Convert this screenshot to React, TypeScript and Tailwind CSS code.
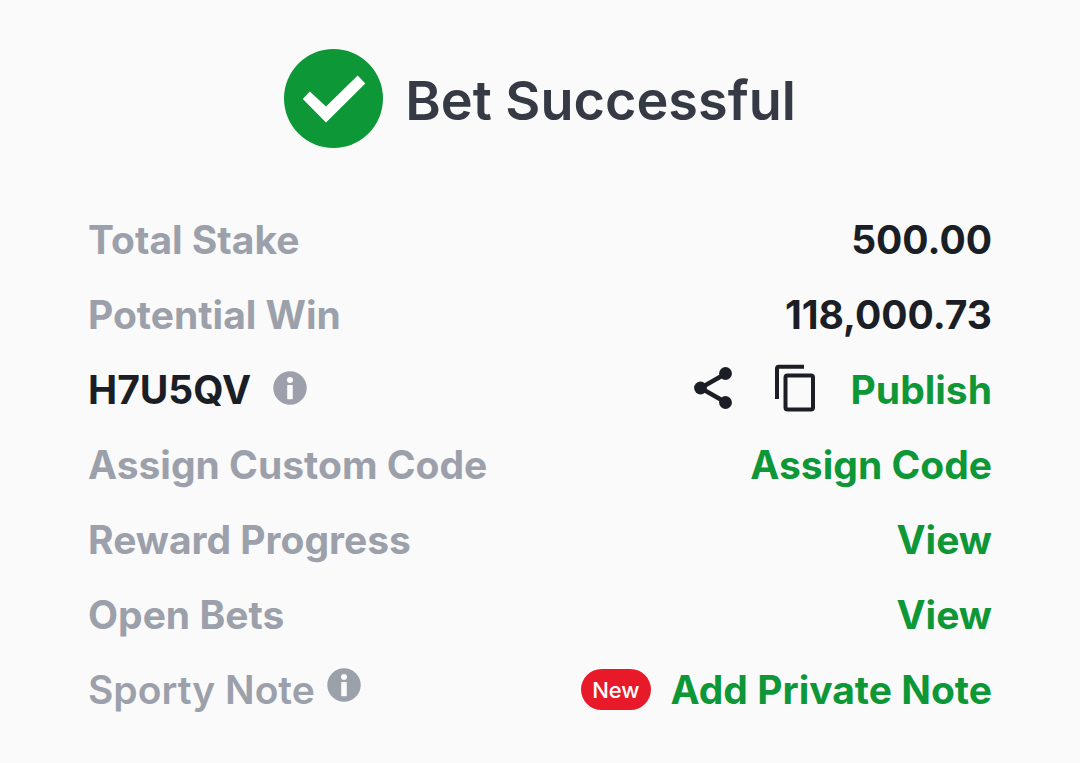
import type { ReactNode } from "react";

function CheckBadge() {
  return (
    <svg viewBox="0 0 99 99" className="size-[99px] shrink-0" aria-hidden="true">
      <circle cx="49.5" cy="49.5" r="49.5" fill="#0d9737" />
      <path d="M25.8 42.5 18.8 50 42 73.5 81.3 34.5 73.7 26.5 42 57.5Z" fill="#fff" />
    </svg>
  );
}

function InfoIcon() {
  return (
    <svg viewBox="0 0 34 34" className="size-[34px]" aria-hidden="true">
      <circle cx="17" cy="17" r="16.7" fill="#9ca0ab" />
      <circle cx="17" cy="9" r="3" fill="#fafafa" />
      <rect x="14.2" y="14" width="5.6" height="14.2" rx="0.8" fill="#fafafa" />
    </svg>
  );
}

function ShareIcon() {
  return (
    <svg viewBox="0 0 40 44" className="h-[44px] w-[40px]" aria-hidden="true">
      <path d="M33 7.5 7.5 22 33 36.5" fill="none" stroke="#1b1e25" strokeWidth="4.4" />
      <circle cx="7.5" cy="22" r="6.4" fill="#1b1e25" />
      <circle cx="32.5" cy="7.5" r="6.4" fill="#1b1e25" />
      <circle cx="32.5" cy="36.5" r="6.4" fill="#1b1e25" />
    </svg>
  );
}

function CopyIcon() {
  return (
    <svg viewBox="0 0 40 48" className="h-[48px] w-[40px]" aria-hidden="true">
      <path d="M2 35V4.5Q2 2.7 3.8 2.7H29" fill="none" stroke="#1b1e25" strokeWidth="4" />
      <rect x="10.5" y="11.5" width="27.5" height="34" rx="2" fill="none" stroke="#1b1e25" strokeWidth="4" />
    </svg>
  );
}

function Row({ label, children }: { label: ReactNode; children: ReactNode }) {
  return (
    <div className="flex h-[75px] items-center justify-between">
      <dt className="flex items-center">{label}</dt>
      <dd className="flex items-center">{children}</dd>
    </div>
  );
}

function Action({ children }: { children: ReactNode }) {
  return (
    <button type="button" className="text-[#0d9737]">
      {children}
    </button>
  );
}

export default function App() {
  return (
    <main className="min-h-screen bg-[#fafafa] px-[88px] pt-[49px] pb-[35px] font-['Inter',sans-serif] text-[39px] leading-[48px] font-bold text-[#1b1e25]">
      <header className="flex items-center justify-center gap-[22px]">
        <CheckBadge />
        <h1 className="pt-[4px] text-[54px] leading-[68px] font-semibold text-[#353a45]">Bet Successful</h1>
      </header>
      <dl className="mt-[54px] text-[#9ca0ab]">
        <Row label="Total Stake">
          <span className="text-[#1b1e25]">500.00</span>
        </Row>
        <Row label="Potential Win">
          <span className="text-[#1b1e25]">118,000.73</span>
        </Row>
        <Row
          label={
            <>
              <span className="text-[#1b1e25]">H7U5QV</span>
              <button type="button" aria-label="About the booking code" className="mb-[3px] ml-[22px]">
                <InfoIcon />
              </button>
            </>
          }
        >
          <button type="button" aria-label="Share" className="mb-[3px]">
            <ShareIcon />
          </button>
          <button type="button" aria-label="Copy" className="mr-[36px] mb-[3px] ml-[42px]">
            <CopyIcon />
          </button>
          <Action>Publish</Action>
        </Row>
        <Row label="Assign Custom Code">
          <Action>Assign Code</Action>
        </Row>
        <Row label="Reward Progress">
          <Action>View</Action>
        </Row>
        <Row label="Open Bets">
          <Action>View</Action>
        </Row>
        <Row
          label={
            <>
              <span className="font-semibold">Sporty Note</span>
              <button type="button" aria-label="About Sporty Note" className="mb-[10px] ml-[12px]">
                <InfoIcon />
              </button>
            </>
          }
        >
          <span className="mr-[20px] flex h-[41px] items-center rounded-full bg-[#e81a29] px-[11px] text-[22px] leading-[28px] font-medium text-white">
            New
          </span>
          <Action>Add Private Note</Action>
        </Row>
      </dl>
    </main>
  );
}
